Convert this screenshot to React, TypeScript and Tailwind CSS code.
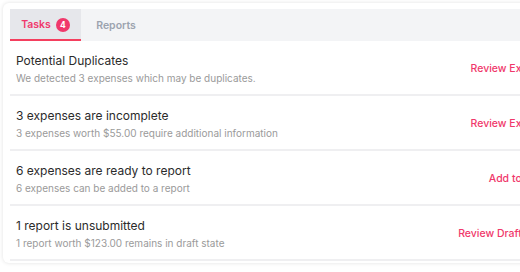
import React from "react";

const rows = [
  { title: "Potential Duplicates", sub: "We detected 3 expenses which may be duplicates.", action: "Review Expenses" },
  { title: "3 expenses are incomplete", sub: "3 expenses worth $55.00 require additional information", action: "Review Expenses" },
  { title: "6 expenses are ready to report", sub: "6 expenses can be added to a report", action: "Add to Report" },
  { title: "1 report is unsubmitted", sub: "1 report worth $123.00 remains in draft state", action: "Review Draft Report" },
];

export default function App() {
  return (
    <div className="w-[520px] h-[272px] overflow-hidden bg-white pl-[3px] pt-[3px]" style={{ fontFamily: "Inter, 'Noto Sans', sans-serif" }}>
      <div className="w-[620px] rounded-[6px] bg-white shadow-[0_0_4px_rgba(0,0,0,0.12)] px-[7px] pt-[6px] pb-[2px]">
        <div className="flex h-[32px] bg-[#f3f4f6]">
          <div className="flex w-[71px] items-center justify-center gap-[5px] border-b-2 border-[#f43f5e] bg-[#e6e7eb] pt-[2px]">
            <span className="text-[10.5px] font-semibold text-[#f0386b]">Tasks</span>
            <span className="flex h-[14px] w-[14px] items-center justify-center rounded-full bg-[#f0386b] text-[8.5px] font-bold text-white">4</span>
          </div>
          <div className="flex w-[70px] items-center justify-center pt-[2px]">
            <span className="text-[10.5px] font-semibold text-[#9ca3af]">Reports</span>
          </div>
        </div>
        {rows.map((r) => (
          <div key={r.title} className="flex items-center justify-between border-b-2 border-[#efeff1] px-[6px] pt-[10px] pb-[8px]">
            <div className="flex flex-col">
              <span className="text-[12px] leading-[20px] font-normal text-[#2b2b2b]">{r.title}</span>
              <span className="text-[10px] leading-[15px] text-[#9a9a9a]">{r.sub}</span>
            </div>
            <span className="pr-[52px] text-[10.5px] font-medium text-[#f0386b]">{r.action}</span>
          </div>
        ))}
      </div>
    </div>
  );
}
